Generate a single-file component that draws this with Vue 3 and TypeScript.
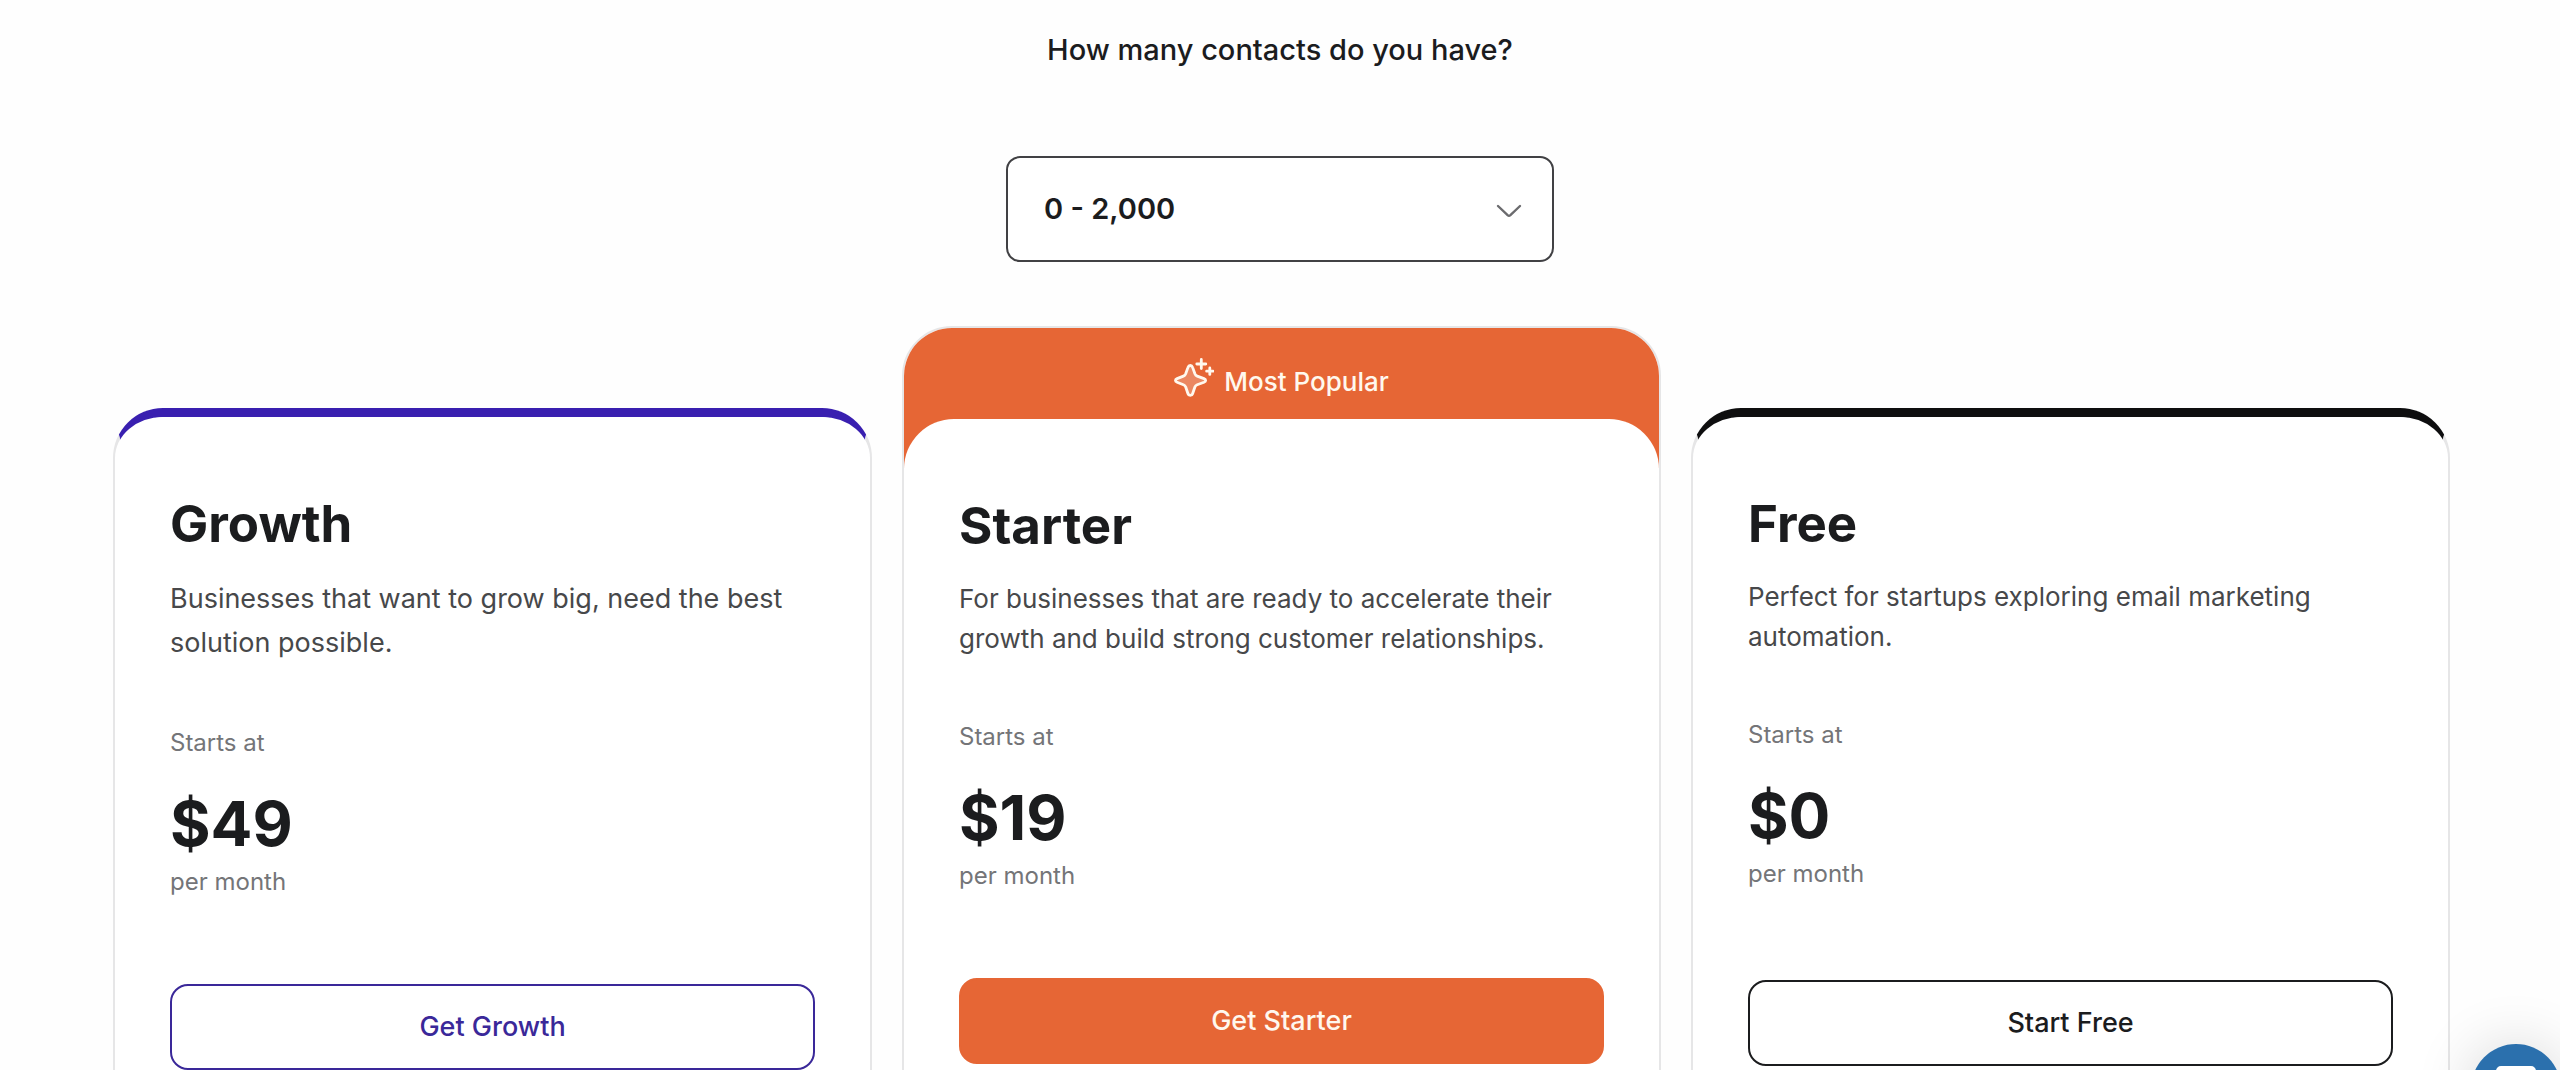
<script setup lang="ts">
import { ref } from 'vue'

interface Plan {
  id: string
  name: string
  description: string
  price: string
  cta: string
  popular?: boolean
}

const contacts = ref('0 - 2,000')
const contactRanges: string[] = ['0 - 2,000']

const plans: Plan[] = [
  {
    id: 'growth',
    name: 'Growth',
    description: 'Businesses that want to grow big, need the best solution possible.',
    price: '$49',
    cta: 'Get Growth',
  },
  {
    id: 'starter',
    name: 'Starter',
    description:
      'For businesses that are ready to accelerate their growth and build strong customer relationships.',
    price: '$19',
    cta: 'Get Starter',
    popular: true,
  },
  {
    id: 'free',
    name: 'Free',
    description: 'Perfect for startups exploring email marketing automation.',
    price: '$0',
    cta: 'Start Free',
  },
]
</script>

<template>
  <main class="pricing">
    <header class="picker">
      <label class="picker-label" for="contacts">How many contacts do you have?</label>
      <div class="select-wrap">
        <select id="contacts" v-model="contacts" class="select">
          <option v-for="range in contactRanges" :key="range" :value="range">{{ range }}</option>
        </select>
        <svg class="chevron" viewBox="0 0 26 14" aria-hidden="true">
          <path d="M2 2l9.600 9.100q1.400 1.200 2.800 0L24 2" fill="none" stroke="#6b6b6e" stroke-width="2.400" stroke-linecap="round" />
        </svg>
      </div>
    </header>

    <section class="plans">
      <article v-for="plan in plans" :key="plan.id" class="card" :class="plan.id">
        <div v-if="plan.popular" class="banner">
          <svg class="sparkle" viewBox="0 0 40 40" aria-hidden="true">
            <path
              d="M16.300 7.500c1.200 0 1.900.7 2.300 1.900l2.300 6.400c.5 1.300 1 1.800 2.300 2.300l6.800 2.500c2.200.9 2.200 2.700 0 3.600l-6.800 2.500c-1.300.5-1.800 1-2.300 2.300l-2.300 6.700c-.8 2.300-3.800 2.300-4.600 0l-2.300-6.700c-.5-1.300-1-1.800-2.300-2.300l-6.300-2.500c-2.200-.9-2.200-2.700 0-3.600l6.300-2.500c1.300-.5 1.800-1 2.300-2.300L14 9.400c.4-1.200 1.100-1.900 2.300-1.900z"
              fill="#fff"
              fill-opacity="0.220"
              stroke="#fff8ee"
              stroke-width="2.800"
              stroke-linejoin="round"
            />
            <path d="M27.300 1.500v9M22.800 6h9M35.800 10v6.400M32.600 13.200H39" fill="none" stroke="#fff8ee" stroke-width="2.800" stroke-linecap="round" />
          </svg>
          <span>Most Popular</span>
        </div>
        <div class="body">
          <h2 class="name">{{ plan.name }}</h2>
          <p class="description">{{ plan.description }}</p>
          <p class="note">Starts at</p>
          <p class="price">{{ plan.price }}</p>
          <p class="note">per month</p>
          <button type="button" class="cta">{{ plan.cta }}</button>
        </div>
      </article>
    </section>

    <button type="button" class="chat" aria-label="Open chat">
      <svg viewBox="0 0 40 44" aria-hidden="true">
        <path d="M5 0h30a5 5 0 0 1 5 5v38l-9-7H5a5 5 0 0 1-5-5V5a5 5 0 0 1 5-5z" fill="#fff" />
      </svg>
    </button>
  </main>
</template>

<style>
html,
body {
  margin: 0;
  background: #fefefe;
}
body {
  overflow-x: hidden;
}
</style>

<style scoped>
.pricing {
  box-sizing: border-box;
  height: 100vh;
  overflow: hidden;
  padding-top: 30px;
  background: #fefefe;
  color: #1b1c1e;
  font-family: Inter, 'Liberation Sans', sans-serif;
}

.picker {
  display: flex;
  flex-direction: column;
  align-items: center;
  gap: 86px;
}

.picker-label {
  font-size: 29px;
  line-height: 40px;
  font-weight: 500;
}

.select-wrap {
  position: relative;
  width: 548px;
  max-width: 90%;
}

.select {
  display: block;
  box-sizing: border-box;
  width: 100%;
  height: 106px;
  padding: 0 72px 0 36px;
  border: 2px solid #414144;
  border-radius: 14px;
  appearance: none;
  background: #fff;
  color: #1b1c1e;
  font: 600 29px/40px Inter, 'Liberation Sans', sans-serif;
}

.chevron {
  position: absolute;
  top: 48px;
  right: 32px;
  width: 26px;
  height: 14px;
  pointer-events: none;
}

.plans {
  display: grid;
  grid-template-columns: repeat(3, minmax(0, 1fr));
  gap: 30px;
  padding: 64px 110px 0 113px;
}

.card {
  margin-top: 82px;
  border: 2px solid #e6e6e7;
  border-top-width: 9px;
  border-radius: 50px;
  background: #fff;
}

.growth {
  border-top-color: #391fb0;
}

.free {
  border-top-color: #0e0e0f;
}

.starter {
  margin-top: 0;
  border-top-width: 2px;
  overflow: hidden;
}

.banner {
  display: flex;
  align-items: flex-start;
  justify-content: center;
  gap: 10px;
  padding: 30px 0 62px;
  background: #e66635;
  color: #fff8ee;
  font-size: 26px;
  line-height: 48px;
  font-weight: 500;
}

.sparkle {
  width: 40px;
  height: 40px;
}

.body {
  padding: 75px 55px 72px;
  border-radius: 50px;
  background: #fff;
}

.starter .body {
  margin-top: -49px;
}

.name,
.description,
.note,
.price {
  margin: 0;
}

.name {
  margin-bottom: 21px;
  font-size: 51px;
  line-height: 64px;
  font-weight: 700;
}

.description {
  margin-bottom: 62px;
  color: #47484a;
  font-size: 26px;
  line-height: 40px;
}

.growth .description {
  font-size: 27px;
  line-height: 44px;
}

.note {
  color: #747578;
  font-size: 24px;
  line-height: 32px;
}

.price {
  margin: 27px 0 4px;
  font-size: 62px;
  line-height: 76px;
  font-weight: 700;
}

.cta {
  display: block;
  box-sizing: border-box;
  width: 100%;
  height: 86px;
  margin-top: 86px;
  border: 2px solid #1b1c1e;
  border-radius: 18px;
  background: #fff;
  color: #1b1c1e;
  font: 500 27px/40px Inter, 'Liberation Sans', sans-serif;
}

.growth .cta {
  border-color: #3a2899;
  color: #3a2899;
}

.starter .cta {
  border-color: #e66635;
  background: #e66635;
  color: #fff8ee;
}

.free .cta {
  margin-top: 90px;
}

.chat {
  position: fixed;
  right: -1px;
  bottom: -64px;
  display: flex;
  justify-content: center;
  width: 90px;
  height: 90px;
  padding: 22px 0 0;
  border: 0;
  border-radius: 50%;
  background: #2b70ad;
  box-shadow: 0 2px 60px rgba(0, 0, 0, 0.160);
}

.chat svg {
  width: 40px;
  height: 44px;
}
</style>
